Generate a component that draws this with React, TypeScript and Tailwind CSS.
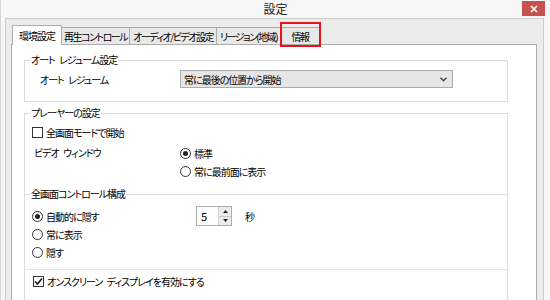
import React from 'react';

const font = "font-['Noto_Sans_CJK_JP','Noto_Sans',sans-serif] [font-feature-settings:'palt']";

function Radio({ checked, label }: { checked?: boolean; label: string }) {
  return (
    <div className="flex items-center h-[18px]">
      <span className="w-[11px] h-[11px] rounded-full border border-[#333333] bg-white flex items-center justify-center">
        {checked && <span className="w-[5px] h-[5px] rounded-full bg-[#222222]" />}
      </span>
      <span className="ml-[3px] whitespace-nowrap">{label}</span>
    </div>
  );
}

function Checkbox({ checked, label }: { checked?: boolean; label: string }) {
  return (
    <div className="flex items-center h-[17px]">
      <span className="w-[11px] h-[11px] border border-[#333333] bg-white flex items-center justify-center">
        {checked && (
          <svg width="9" height="9" viewBox="0 0 9 9">
            <path d="M1 4.5 L3.5 7 L8 1.5" stroke="#111" strokeWidth="1.6" fill="none" />
          </svg>
        )}
      </span>
      <span className="ml-[3px] whitespace-nowrap">{label}</span>
    </div>
  );
}

function Group({
  title,
  className,
  children,
}: {
  title?: string;
  className: string;
  children: React.ReactNode;
}) {
  return (
    <div className={`relative w-[484px] border border-[#dcdcdc] ${className}`}>
      {title && (
        <span className="absolute left-[5px] top-[-8px] bg-white px-[1px] leading-[14px] whitespace-nowrap">
          {title}
        </span>
      )}
      {children}
    </div>
  );
}

export default function App() {
  const tabs = [
    { label: '環境設定', w: 'w-[50px]', active: true },
    { label: '再生コントロール', w: 'w-[69px]' },
    { label: 'オーディオ/ビデオ設定', w: 'w-[88px]' },
    { label: 'リージョン(地域)', w: 'w-[65px]' },
    { label: '情報', w: 'w-[40px]', marked: true },
  ];

  return (
    <div className={`w-[550px] h-[300px] overflow-hidden bg-[#f7f7f7] border-l border-[#d6d6d6] flex flex-col text-[10px] tracking-[-1px] [word-spacing:3px] text-black ${font}`}>
      {/* title bar */}
      <div className="relative h-[23px] flex items-center justify-center text-[12px] tracking-normal text-[#222222]">
        設定
        <div className="absolute right-[5px] top-[1px] w-[23px] h-[15px] bg-[#c75050] flex items-center justify-center">
          <svg width="8" height="8" viewBox="0 0 8 8">
            <path d="M1 1 L7 7 M7 1 L1 7" stroke="#fff" strokeWidth="1.6" />
          </svg>
        </div>
      </div>

      {/* dialog frame */}
      <div className="flex-1 ml-[4px] mr-[6px] border-l border-t border-r border-[#cdcdcd] bg-[#ececec] pt-[6px] pl-[5px] pr-[6px] flex flex-col">
        <div className="flex items-end h-[19px] pl-[1px]">
          {tabs.map((t, i) =>
            t.active ? (
              <div
                key={t.label}
                className={`${t.w} h-[20px] -mb-px relative z-10 bg-white border-l border-t border-r border-[#acacac] flex items-center justify-center whitespace-nowrap`}
              >
                {t.label}
              </div>
            ) : (
              <div
                key={t.label}
                className={`${t.w} h-[17px] ${i > 0 ? '-ml-px' : ''} relative bg-[#e8e8e8] border-l border-t border-r border-[#acacac] flex items-center justify-center whitespace-nowrap tracking-[-1.5px]`}
              >
                {t.label}
                {t.marked && (
                  <span className="absolute left-[-1px] right-[-2px] top-[-6px] bottom-[-3px] border-2 border-[#e8141a]" />
                )}
              </div>
            )
          )}
        </div>

        {/* tab panel */}
        <div className="flex-1 bg-white border-l border-t border-r border-[#acacac] pl-[12px] pt-[15px]">
          <Group title="オート レジューム設定" className="h-[42px] pt-[9px]">
            <div className="flex items-center pl-[15px]">
              <span className="w-[140px]">オート レジューム</span>
              <div className="w-[273px] h-[18px] bg-[#e6e6e6] border border-[#acacac] flex items-center justify-between pl-[3px] pr-[5px]">
                <span>常に最後の位置から開始</span>
                <svg width="7" height="5" viewBox="0 0 7 5">
                  <path d="M0.5 0.8 L3.5 3.8 L6.5 0.8" stroke="#444" strokeWidth="1.4" fill="none" />
                </svg>
              </div>
            </div>
          </Group>

          <Group title="プレーヤーの設定" className="mt-[11px] h-[82px] pt-[10px] pl-[7px]">
            <Checkbox label="全画面モードで開始" />
            <div className="flex mt-[3px]">
              <span className="w-[148px] pl-[2px] h-[17px] flex items-center">ビデオ ウィンドウ</span>
              <div className="flex flex-col">
                <Radio checked label="標準" />
                <Radio label="常に最前面に表示" />
              </div>
            </div>
          </Group>

          <Group title="全画面コントロール構成" className="-mt-px h-[76px] pt-[12px] pl-[7px]">
            <div className="flex items-center h-[18px]">
              <div className="w-[164px]">
                <Radio checked label="自動的に隠す" />
              </div>
              <div className="w-[36px] h-[20px] border border-[#acacac] bg-white flex">
                <span className="flex-1 pl-[4px] flex items-center text-[11px] tracking-normal">5</span>
                <div className="w-[13px] flex flex-col border-l border-[#d0d0d0]">
                  <span className="flex-1 bg-[#ececec] border-b border-[#c8c8c8] flex items-center justify-center">
                    <svg width="5" height="3" viewBox="0 0 5 3">
                      <path d="M0 3 L2.5 0 L5 3 Z" fill="#222" />
                    </svg>
                  </span>
                  <span className="flex-1 bg-[#ececec] flex items-center justify-center">
                    <svg width="5" height="3" viewBox="0 0 5 3">
                      <path d="M0 0 L2.5 3 L5 0 Z" fill="#222" />
                    </svg>
                  </span>
                </div>
              </div>
              <span className="ml-[13px]">秒</span>
            </div>
            <Radio label="常に表示" />
            <Radio label="隠す" />
          </Group>

          <Group className="-mt-px h-[40px] pt-[3px] pl-[8px] border-t-[#e6e6e6]">
            <Checkbox checked label="オンスクリーン ディスプレイを有効にする" />
          </Group>
        </div>
      </div>
    </div>
  );
}
